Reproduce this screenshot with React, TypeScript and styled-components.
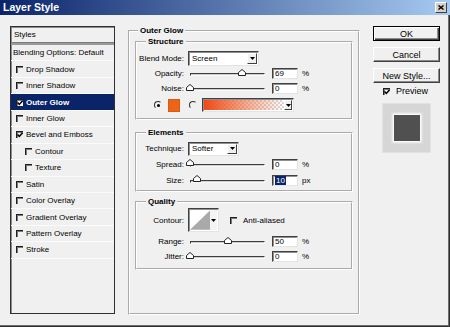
import React from 'react'
import styled, { createGlobalStyle } from 'styled-components'

const GlobalStyle = createGlobalStyle`
  html, body {
    margin: 0;
    padding: 0;
    background: #f0f0f0;
  }
  body {
    font-family: "Liberation Sans", Arial, sans-serif;
    font-size: 8px;
    color: #000;
  }
  * {
    box-sizing: border-box;
  }
`

const Dialog = styled.div`
  width: 450px;
  height: 327px;
  background: #f0f0f0;
  box-shadow: inset -1px -1px 0 #2e2e2e, inset -2px -2px 0 #6e6e6e;
  overflow: hidden;
`

const TitleBar = styled.div`
  height: 15px;
  display: flex;
  align-items: center;
  justify-content: space-between;
  padding: 0 3px;
  background: linear-gradient(to right, #0a246a 0%, #a6caf0 100%);
`

const Title = styled.span`
  color: #fff;
  font-weight: bold;
  font-size: 10.5px;
  line-height: 15px;
`

const CloseBtn = styled.div`
  width: 12px;
  height: 11px;
  display: flex;
  align-items: center;
  justify-content: center;
  background: #d4d0c8;
  border: 1px solid;
  border-color: #fff #404040 #404040 #fff;
`

const Body = styled.div`
  display: flex;
  align-items: flex-start;
  padding: 11px 0 0 10px;
`

/* ---------- styles list ---------- */

const StylesList = styled.div`
  width: 105px;
  height: 288px;
  border: 1px solid #303030;
  box-shadow: inset 1px 1px 0 #8c8c8c;
  display: flex;
  flex-direction: column;
`

const ListHeader = styled.div`
  height: 15px;
  display: flex;
  align-items: center;
  padding-left: 3px;
`

const HeaderRule = styled.div`
  height: 3px;
  background: #9a9a9a;
  border-top: 1px solid #7c7c7c;
`

const ListRow = styled.div<{ $selected?: boolean; $indent?: boolean; $plain?: boolean }>`
  height: 16.45px;
  display: flex;
  align-items: center;
  gap: 3px;
  padding-left: ${p => (p.$indent ? 14 : p.$plain ? 2 : 5)}px;
  border-bottom: 1px solid #fbfbfb;
  background: ${p => (p.$selected ? '#0a246a' : 'transparent')};
  color: ${p => (p.$selected ? '#fff' : '#000')};
  font-weight: ${p => (p.$selected ? 'bold' : 'normal')};
  white-space: nowrap;
`

const Check = styled.span<{ $filled?: boolean }>`
  width: 7px;
  height: 7px;
  flex: none;
  display: flex;
  align-items: center;
  justify-content: center;
  border-top: 1px solid #1e1e1e;
  border-left: 1px solid #1e1e1e;
  box-shadow: inset 1px 1px 0 #7a7a7a;
  background: ${p => (p.$filled ? '#fff' : 'transparent')};
`

const CheckMark = () => (
  <svg width="6" height="6" viewBox="0 0 6 6">
    <path d="M0.6 2.6 L2.3 4.4 L5.6 0.8" fill="none" stroke="#000" strokeWidth="1.5" />
  </svg>
)

/* ---------- group boxes ---------- */

const Group = styled.fieldset<{ $legend: number }>`
  margin: 0;
  padding: 0;
  min-width: 0;
  border: 2px groove #fff;

  > legend {
    margin-left: ${p => p.$legend}px;
    padding: 0 2px;
    font-weight: bold;
    font-size: 8px;
    line-height: 10px;
  }
`

const OuterBox = styled(Group)`
  width: 232px;
  height: 289px;
  margin-left: 13px;
  padding: 0 5px;
`

const Section = styled(Group)<{ $top: number; $bottom: number }>`
  margin-top: ${p => p.$top}px;
  padding-bottom: ${p => p.$bottom}px;
`

const Row = styled.div<{ $h: number; $top?: number }>`
  display: flex;
  align-items: center;
  height: ${p => p.$h}px;
  margin-top: ${p => p.$top ?? 0}px;
`

const Label = styled.span`
  width: 47px;
  margin-right: 4px;
  text-align: right;
  white-space: nowrap;
`

const Sunken = styled.div`
  background: #fff;
  border: 1px solid;
  border-color: #404040 #e4e4e4 #e4e4e4 #404040;
  box-shadow: inset 1px 1px 0 #909090;
`

const Select = styled(Sunken)<{ $w: number; $h: number }>`
  width: ${p => p.$w}px;
  height: ${p => p.$h}px;
  display: flex;
  align-items: center;
  justify-content: space-between;
  padding: 1px 1px 1px 3px;
`

const DropBtn = styled.div<{ $w?: number }>`
  width: ${p => p.$w ?? 10}px;
  height: 100%;
  flex: none;
  display: flex;
  align-items: center;
  justify-content: center;
  background: #f0f0f0;
  border: 1px solid;
  border-color: #fff #404040 #404040 #fff;
`

const Arrow = () => (
  <svg width="5" height="3" viewBox="0 0 5 3">
    <polygon points="0,0 5,0 2.5,3" fill="#000" />
  </svg>
)

const SliderBox = styled.div`
  position: relative;
  width: 80px;
  height: 10px;
  display: flex;
  align-items: center;
  padding: 0 3px 0 2px;
`

const Groove = styled.div`
  flex: 1;
  height: 3px;
  margin-top: 2px;
  border: 1px solid;
  border-color: #3c3c3c #f8f8f8 #f8f8f8 #3c3c3c;
  background: #cfcfcf;
`

const Thumb = styled.svg`
  position: absolute;
  top: 0;
`

const ValueBox = styled(Sunken)`
  width: 26px;
  height: 11px;
  margin-left: 4px;
  padding-left: 2px;
  display: flex;
  align-items: center;
  line-height: 9px;
`

const Selected = styled.span`
  background: #0a246a;
  color: #fff;
  padding: 0 1px;
`

const Unit = styled.span`
  margin-left: 4px;
`

const Radio = styled.span<{ $on?: boolean; $left: number }>`
  width: 8px;
  height: 8px;
  margin-left: ${p => p.$left}px;
  flex: none;
  border-radius: 50%;
  border: 1px solid;
  border-color: #303030 #f0f0f0 #f0f0f0 #303030;
  display: flex;
  align-items: center;
  justify-content: center;

  &::after {
    content: '';
    display: ${p => (p.$on ? 'block' : 'none')};
    width: 3px;
    height: 3px;
    border-radius: 50%;
    background: #000;
  }
`

const Swatch = styled.div`
  width: 12px;
  height: 13px;
  margin-left: 6px;
  background: #ef6316;
  border: 1px solid #d85a18;
`

const GradientPick = styled(Sunken)`
  width: 92px;
  height: 14px;
  margin-left: 5px;
  display: flex;
  padding: 1px;
`

const GradientFill = styled.div`
  flex: 1;
  background:
    linear-gradient(to right, #ef4a14 0%, rgba(242, 110, 60, 0.55) 55%, rgba(255, 160, 120, 0) 100%),
    repeating-conic-gradient(#ffffff 0 25%, #d8d8d8 0 50%) 0 0 / 4px 4px;
`

const ContourPick = styled(Sunken)`
  width: 31px;
  height: 24px;
  display: flex;
  padding: 1px;
`

const ContourArrow = styled.div`
  width: 7px;
  display: flex;
  justify-content: center;
  padding-top: 9px;
  background: #f4f4f4;
`

const CheckLabel = styled.span`
  margin-left: 11px;
  display: flex;
  align-items: center;
  gap: 6px;
`

/* ---------- right column ---------- */

const Side = styled.div`
  width: 67px;
  margin-left: 13px;
  display: flex;
  flex-direction: column;
`

const Button = styled.button<{ $default?: boolean }>`
  height: 15px;
  width: 100%;
  margin: 0 0 6px;
  padding: 0;
  font-family: "Liberation Sans", Arial, sans-serif;
  font-size: 9px;
  color: #000;
  background: #f0f0f0;
  border: 1px solid;
  border-color: ${p => (p.$default ? '#000' : '#fff #404040 #404040 #fff')};
  box-shadow: ${p =>
    p.$default
      ? 'inset 1px 1px 0 #fff, inset -1px -1px 0 #404040, inset -2px -2px 0 #8a8a8a'
      : 'inset -1px -1px 0 #8a8a8a'};
`

const PreviewRow = styled.label`
  height: 12px;
  margin-top: -4px;
  padding-left: 10px;
  display: flex;
  align-items: center;
  gap: 6px;
  font-size: 9px;
`

const Thumbnail = styled.div`
  width: 49px;
  height: 50px;
  margin: 6px 0 0 9px;
  display: flex;
  align-items: center;
  justify-content: center;
  background: #d6d6d6;
  border: 1px solid #e2e2e2;
`

const ThumbSquare = styled.div`
  width: 26px;
  height: 26px;
  background: #505050;
  box-shadow: 0 0 0 1px #fafafa, 0 0 2px 2px rgba(255, 255, 255, 0.7);
`

type Slider = { label: string; pos: number; value: string; unit: string; selected?: boolean }

const structureSliders: Slider[] = [
  { label: 'Opacity:', pos: 0.69, value: '69', unit: '%' },
  { label: 'Noise:', pos: 0, value: '0', unit: '%' },
]

const elementSliders: Slider[] = [
  { label: 'Spread:', pos: 0, value: '0', unit: '%' },
  { label: 'Size:', pos: 0.09, value: '10', unit: 'px', selected: true },
]

const qualitySliders: Slider[] = [
  { label: 'Range:', pos: 0.5, value: '50', unit: '%' },
  { label: 'Jitter:', pos: 0, value: '0', unit: '%' },
]

const styleItems = [
  { label: 'Blending Options: Default', plain: true },
  { label: 'Drop Shadow' },
  { label: 'Inner Shadow' },
  { label: 'Outer Glow', checked: true, selected: true },
  { label: 'Inner Glow' },
  { label: 'Bevel and Emboss', checked: true },
  { label: 'Contour', indent: true },
  { label: 'Texture', indent: true },
  { label: 'Satin' },
  { label: 'Color Overlay' },
  { label: 'Gradient Overlay' },
  { label: 'Pattern Overlay' },
  { label: 'Stroke' },
]

function SliderRow({ s, h }: { s: Slider; h: number }) {
  return (
    <Row $h={h}>
      <Label>{s.label}</Label>
      <SliderBox>
        <Groove />
        <Thumb width="8" height="7" viewBox="0 0 8 7" style={{ left: `${s.pos * 75 - 2}px` }}>
          <polygon points="4,0.5 7.5,3.5 7.5,6.5 0.5,6.5 0.5,3.5" fill="#fff" stroke="#222" />
        </Thumb>
      </SliderBox>
      <ValueBox>{s.selected ? <Selected>{s.value}</Selected> : s.value}</ValueBox>
      <Unit>{s.unit}</Unit>
    </Row>
  )
}

export default function App() {
  return (
    <Dialog>
      <GlobalStyle />
      <TitleBar>
        <Title>Layer Style</Title>
        <CloseBtn>
          <svg width="6" height="5" viewBox="0 0 6 5">
            <path d="M0.5 0.5 L5.5 4.5 M5.5 0.5 L0.5 4.5" stroke="#000" strokeWidth="1.4" />
          </svg>
        </CloseBtn>
      </TitleBar>

      <Body>
        <StylesList>
          <ListHeader>Styles</ListHeader>
          <HeaderRule />
          {styleItems.map(item => (
            <ListRow
              key={item.label}
              $selected={item.selected}
              $indent={item.indent}
              $plain={item.plain}
            >
              {!item.plain && (
                <Check $filled={item.selected}>{item.checked && <CheckMark />}</Check>
              )}
              {item.label}
            </ListRow>
          ))}
        </StylesList>

        <OuterBox $legend={3}>
          <legend>Outer Glow</legend>

          <Section $legend={9} $top={1} $bottom={5}>
            <legend>Structure</legend>
            <Row $h={15} $top={4}>
              <Label>Blend Mode:</Label>
              <Select $w={71} $h={15}>
                Screen
                <DropBtn>
                  <Arrow />
                </DropBtn>
              </Select>
            </Row>
            {structureSliders.map(s => (
              <SliderRow key={s.label} s={s} h={15} />
            ))}
            <Row $h={16} $top={1}>
              <Radio $on $left={17} />
              <Swatch />
              <Radio $left={9} />
              <GradientPick>
                <GradientFill />
                <DropBtn $w={8}>
                  <Arrow />
                </DropBtn>
              </GradientPick>
            </Row>
          </Section>

          <Section $legend={9} $top={8} $bottom={2}>
            <legend>Elements</legend>
            <Row $h={15} $top={3}>
              <Label>Technique:</Label>
              <Select $w={51} $h={14}>
                Softer
                <DropBtn>
                  <Arrow />
                </DropBtn>
              </Select>
            </Row>
            {elementSliders.map(s => (
              <SliderRow key={s.label} s={s} h={16} />
            ))}
          </Section>

          <Section $legend={9} $top={5} $bottom={4}>
            <legend>Quality</legend>
            <Row $h={24} $top={1}>
              <Label>Contour:</Label>
              <ContourPick>
                <svg width="21" height="20" viewBox="0 0 21 20">
                  <rect width="21" height="20" fill="#fff" />
                  <polygon points="0,20 21,0 21,20" fill="#a9a9a9" />
                </svg>
                <ContourArrow>
                  <Arrow />
                </ContourArrow>
              </ContourPick>
              <CheckLabel>
                <Check />
                Anti-aliased
              </CheckLabel>
            </Row>
            <Row $h={2} />
            {qualitySliders.map(s => (
              <SliderRow key={s.label} s={s} h={15} />
            ))}
          </Section>
        </OuterBox>

        <Side>
          <Button $default>OK</Button>
          <Button>Cancel</Button>
          <Button>New Style...</Button>
          <PreviewRow>
            <Check>
              <CheckMark />
            </Check>
            Preview
          </PreviewRow>
          <Thumbnail>
            <ThumbSquare />
          </Thumbnail>
        </Side>
      </Body>
    </Dialog>
  )
}
